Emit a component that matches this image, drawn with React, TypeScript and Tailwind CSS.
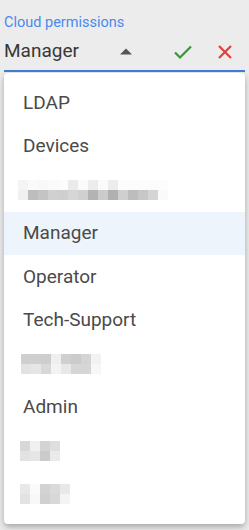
import React from "react";

const Blur = ({ rows }: { rows: string[][] }) => (
  <div className="flex flex-col">
    {rows.map((r, i) => (
      <div key={i} className="flex">
        {r.map((c, j) => (
          <div key={j} className="h-[10px] w-[10px]" style={{ background: c }} />
        ))}
      </div>
    ))}
  </div>
);

const Item = ({ children, active }: { children: React.ReactNode; active?: boolean }) => (
  <div className={`h-[43.5px] flex items-center pl-[19px] text-[19px] text-[#4a4a4a] ${active ? "bg-[#eef4fb]" : ""}`}>
    {children}
  </div>
);

export default function App() {
  return (
    <div className="w-[249px] h-[530px] bg-[#ececec] relative overflow-hidden" style={{ fontFamily: "Roboto, 'Liberation Sans', sans-serif" }}>
      <div className="px-[4px]">
        <div className="pt-[14px] h-[33px] text-[14.5px] leading-[18px] text-[#4a89ee]">Cloud permissions</div>
        <div className="h-[39px] flex items-center border-b-2 border-[#3f7fd6]">
          <span className="text-[19px] text-[#383838] w-[113px]">Manager</span>
          <svg width="12" height="7" viewBox="0 0 12 7" className="ml-[3px]">
            <path d="M0 6.5 L6 0.5 L12 6.5 Z" fill="#555" />
          </svg>
          <svg width="20" height="16" viewBox="0 0 20 16" className="ml-[41px]">
            <path d="M2 8.5 L7 13.5 L18 2.5" stroke="#3a953a" strokeWidth="2.2" fill="none" />
          </svg>
          <svg width="16" height="16" viewBox="0 0 16 16" className="ml-[24px]">
            <path d="M2 2 L14 14 M14 2 L2 14" stroke="#e0413a" strokeWidth="2.2" fill="none" />
          </svg>
        </div>
      </div>
      <div className="absolute left-[4px] top-[73px] w-[241px] bg-white rounded-[4px] shadow-[0_3px_6px_rgba(0,0,0,0.3)] py-[8px]">
        <Item>LDAP</Item>
        <Item>Devices</Item>
        <div className="h-[43.5px] flex items-center pl-[14px]">
          <Blur rows={[
            ["#f4f4f4","#fafafa","#f8f8f8","#fafafa","#fcfcfc","#eaeaea","#fafafa","#ececec","#fafafa","#ececec","#fcfcfc","#fcfcfc","#fcfcfc","#fcfcfc","#fcfcfc"],
            ["#f0f0f0","#bdbdbd","#c4c4c4","#d0d0d0","#cfcfcf","#d6d6d6","#d0d0d0","#b3b3b3","#cbcbcb","#b0b0b0","#cfcfcf","#bdbdbd","#c7c7c7","#d4d4d4","#fafafa"],
          ]} />
        </div>
        <Item active>Manager</Item>
        <Item>Operator</Item>
        <Item>Tech-Support</Item>
        <div className="h-[43.5px] flex items-center pl-[17px]">
          <Blur rows={[
            ["#cfcfcf","#cfcfcf","#cdcdcd","#efefef","#cfcfcf","#cbcbcb","#d4d4d4","#f2f2f2"],
            ["#e2e2e2","#e6e6e6","#d8d8d8","#f3f3f3","#e8e8e8","#d6d6d6","#d6d6d6","#f7f7f7"],
          ]} />
        </div>
        <Item>Admin</Item>
        <div className="h-[43.5px] flex items-center pl-[16px]">
          <Blur rows={[
            ["#d8d8d8","#f0f0f0","#d4d4d4","#dedede"],
            ["#e2e2e2","#e6e6e6","#cbcbcb","#eaeaea"],
          ]} />
        </div>
        <div className="h-[43.5px] flex items-center pl-[16px]">
          <Blur rows={[
            ["#e8e8e8","#fafafa","#d2d2d2","#dadada","#e8e8e8"],
            ["#e2e2e2","#f8f8f8","#d0d0d0","#d8d8d8","#f4f4f4"],
          ]} />
        </div>
      </div>
    </div>
  );
}
